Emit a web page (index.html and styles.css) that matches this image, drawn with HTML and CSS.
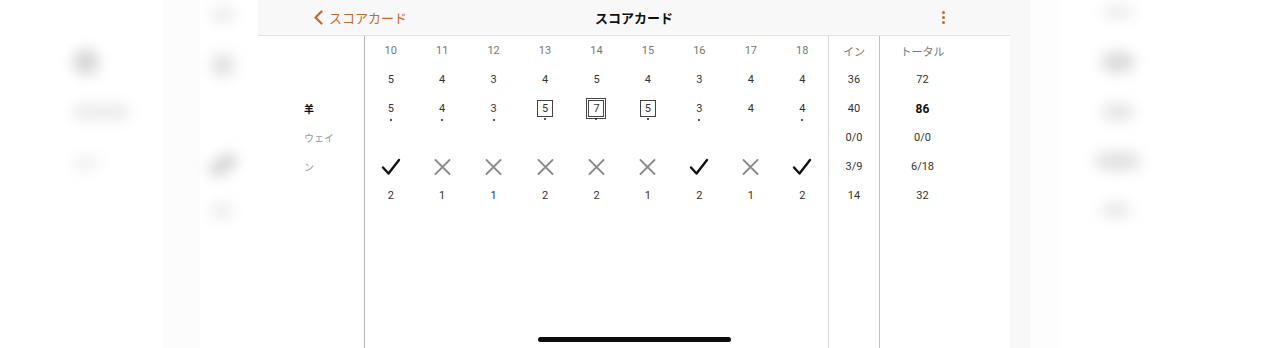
FILE: index.html
```html
<!DOCTYPE html>
<html lang="ja">
<head>
<meta charset="utf-8">
<title>スコアカード</title>
<link rel="stylesheet" href="styles.css">
</head>
<body>
<div class="screen">
  <div class="side side-left">
    <div class="bcol bcol-a">
      <div class="blob bl-1"></div>
      <div class="blob bl-2"></div>
      <div class="blob bl-3"></div>
    </div>
    <div class="strip strip-l"></div>
    <div class="bcol bcol-b">
      <div class="blob bm-1"></div>
      <div class="blob bm-2"></div>
      <div class="blob bm-3"></div>
      <div class="blob bm-4"></div>
    </div>
  </div>

  <main class="panel">
    <header class="nav">
      <a class="back" href="#">
        <svg class="chev" width="10" height="15" viewBox="0 0 10 15"><path d="M8.5 1.5 L2.5 7.5 L8.5 13.5" fill="none" stroke="currentColor" stroke-width="2.3" stroke-linecap="round" stroke-linejoin="round"/></svg>
        <span>スコアカード</span>
      </a>
      <h1 class="title">スコアカード</h1>
      <div class="menu"><span></span><span></span><span></span></div>
    </header>

    <div class="card">
      <div class="col labels">
        <div class="cell head"></div>
        <div class="cell"></div>
        <div class="cell lbl strong">羊</div>
        <div class="cell lbl">ウェイ</div>
        <div class="cell lbl">ン</div>
        <div class="cell"></div>
      </div>

      <div class="holes">
        <div class="col">
          <div class="cell head">10</div><div class="cell">5</div>
          <div class="cell"><span class="sc dot">5</span></div><div class="cell"></div>
          <div class="cell"><svg class="ok" width="20" height="18" viewBox="0 0 20 18"><path d="M2 9.5 L7.5 15.5 L18 2"/></svg></div>
          <div class="cell">2</div>
        </div>
        <div class="col">
          <div class="cell head">11</div><div class="cell">4</div>
          <div class="cell"><span class="sc dot">4</span></div><div class="cell"></div>
          <div class="cell"><svg class="ng" width="17" height="16" viewBox="0 0 17 16"><path d="M1.5 1 L15.5 15 M15.5 1 L1.5 15"/></svg></div>
          <div class="cell">1</div>
        </div>
        <div class="col">
          <div class="cell head">12</div><div class="cell">3</div>
          <div class="cell"><span class="sc dot">3</span></div><div class="cell"></div>
          <div class="cell"><svg class="ng" width="17" height="16" viewBox="0 0 17 16"><path d="M1.5 1 L15.5 15 M15.5 1 L1.5 15"/></svg></div>
          <div class="cell">1</div>
        </div>
        <div class="col">
          <div class="cell head">13</div><div class="cell">4</div>
          <div class="cell"><span class="sc dot box">5</span></div><div class="cell"></div>
          <div class="cell"><svg class="ng" width="17" height="16" viewBox="0 0 17 16"><path d="M1.5 1 L15.5 15 M15.5 1 L1.5 15"/></svg></div>
          <div class="cell">2</div>
        </div>
        <div class="col">
          <div class="cell head">14</div><div class="cell">5</div>
          <div class="cell"><span class="sc dot box dbl">7</span></div><div class="cell"></div>
          <div class="cell"><svg class="ng" width="17" height="16" viewBox="0 0 17 16"><path d="M1.5 1 L15.5 15 M15.5 1 L1.5 15"/></svg></div>
          <div class="cell">2</div>
        </div>
        <div class="col">
          <div class="cell head">15</div><div class="cell">4</div>
          <div class="cell"><span class="sc dot box">5</span></div><div class="cell"></div>
          <div class="cell"><svg class="ng" width="17" height="16" viewBox="0 0 17 16"><path d="M1.5 1 L15.5 15 M15.5 1 L1.5 15"/></svg></div>
          <div class="cell">1</div>
        </div>
        <div class="col">
          <div class="cell head">16</div><div class="cell">3</div>
          <div class="cell"><span class="sc dot">3</span></div><div class="cell"></div>
          <div class="cell"><svg class="ok" width="20" height="18" viewBox="0 0 20 18"><path d="M2 9.5 L7.5 15.5 L18 2"/></svg></div>
          <div class="cell">2</div>
        </div>
        <div class="col">
          <div class="cell head">17</div><div class="cell">4</div>
          <div class="cell"><span class="sc">4</span></div><div class="cell"></div>
          <div class="cell"><svg class="ng" width="17" height="16" viewBox="0 0 17 16"><path d="M1.5 1 L15.5 15 M15.5 1 L1.5 15"/></svg></div>
          <div class="cell">1</div>
        </div>
        <div class="col">
          <div class="cell head">18</div><div class="cell">4</div>
          <div class="cell"><span class="sc dot">4</span></div><div class="cell"></div>
          <div class="cell"><svg class="ok" width="20" height="18" viewBox="0 0 20 18"><path d="M2 9.5 L7.5 15.5 L18 2"/></svg></div>
          <div class="cell">2</div>
        </div>
      </div>

      <div class="col sum-in">
        <div class="cell head">イン</div>
        <div class="cell">36</div>
        <div class="cell">40</div>
        <div class="cell">0/0</div>
        <div class="cell">3/9</div>
        <div class="cell">14</div>
      </div>

      <div class="col sum-total">
        <div class="cell head">トータル</div>
        <div class="cell">72</div>
        <div class="cell bold">86</div>
        <div class="cell">0/0</div>
        <div class="cell">6/18</div>
        <div class="cell">32</div>
      </div>
    </div>

    <div class="home-indicator"></div>
  </main>

  <div class="side side-right">
    <div class="strip strip-r1"></div>
    <div class="strip strip-r2"></div>
    <div class="bcol bcol-c">
      <div class="blob br-1"></div>
      <div class="blob br-2"></div>
      <div class="blob br-3"></div>
      <div class="blob br-4"></div>
      <div class="blob br-5"></div>
    </div>
  </div>
</div>
</body>
</html>
```

FILE: styles.css
```css
* { box-sizing: border-box; margin: 0; padding: 0; }
html, body { width: 1268px; height: 348px; overflow: hidden; background: #fff; }
body { font-family: Roboto, "Noto Sans CJK JP", sans-serif; color: #333; }

.screen { display: flex; height: 348px; }

/* blurred backdrop */
.side { width: 258px; flex: none; display: flex; height: 100%; overflow: hidden; }
.bcol { display: flex; flex-direction: column; }
.blob { filter: blur(7px); border-radius: 50%; }
.strip { height: 100%; flex: none; }

.bcol-a { width: 163px; flex: none; padding-left: 72px; }
.bl-1 { width: 26px; height: 26px; background: #d6d6d6; margin-top: 49px; margin-left: 1px; }
.bl-2 { width: 58px; height: 14px; background: #e9e9e9; margin-top: 30px; border-radius: 7px; }
.bl-3 { width: 28px; height: 14px; background: #f0f0f0; margin-top: 37px; }

.strip-l { width: 37px; background: #fcfcfc; }

.bcol-b { width: 58px; flex: none; padding-left: 11px; }
.bm-1 { width: 24px; height: 16px; background: #ebebeb; margin-top: 7px; }
.bm-2 { width: 24px; height: 24px; background: #e2e2e2; margin-top: 30px; }
.bm-3 { width: 32px; height: 16px; background: #d2d2d2; margin-top: 80px; margin-left: -4px; transform: rotate(-35deg); }
.bm-4 { width: 22px; height: 16px; background: #ebebeb; margin-top: 30px; }

.strip-r1 { width: 20px; background: #f8f8f8; }
.strip-r2 { width: 30px; background: #fdfdfd; }
.bcol-c { width: 110px; flex: none; padding-left: 41px; }
.br-1 { width: 34px; height: 14px; background: #ececec; margin-top: 5px; }
.br-2 { width: 34px; height: 22px; background: #dadada; margin-top: 32px; }
.br-3 { width: 34px; height: 18px; background: #e4e4e4; margin-top: 30px; }
.br-4 { width: 48px; height: 20px; background: #e1e1e1; margin-top: 30px; margin-left: -7px; }
.br-5 { width: 30px; height: 18px; background: #e9e9e9; margin-top: 30px; }

/* main panel */
.panel { width: 752px; flex: none; display: flex; flex-direction: column; position: relative; background: #fff; }

.nav { height: 36px; flex: none; display: grid; grid-template-columns: 1fr auto 1fr; align-items: center; background: #f8f8f8; border-bottom: 1px solid #e1e1e1; }
.back { display: flex; align-items: center; gap: 6px; padding-left: 55px; color: #c46a2e; font-size: 13px; text-decoration: none; font-family: "Noto Sans CJK JP", sans-serif; }
.chev { display: block; }
.title { font-size: 13px; font-weight: 700; color: #111; font-family: "Noto Sans CJK JP", sans-serif; }
.menu { justify-self: end; padding-right: 65px; display: flex; flex-direction: column; gap: 1.5px; }
.menu span { width: 3.5px; height: 3.5px; border-radius: 50%; background: #c46a2e; }

.card { flex: 1; display: flex; }
.col { display: flex; flex-direction: column; }
.labels { width: 107px; flex: none; border-right: 1px solid #b5b5b5; padding-left: 46px; }
.holes { width: 463px; flex: none; display: grid; grid-template-columns: repeat(9, 1fr); }
.sum-in { width: 51px; flex: none; border-left: 1px solid #d9d9d9; }
.sum-total { width: 86px; flex: none; border-left: 1px solid #c2c2c2; }

.cell { height: 29px; display: flex; align-items: center; justify-content: center; font-size: 11px; color: #333; }
.cell.head { height: 29px; color: #777; }
.labels .cell { justify-content: flex-start; color: #9a9a9a; font-size: 10px; }
.labels .cell.strong { color: #111; font-weight: 700; }
.bold { font-weight: 700; color: #111; font-size: 12px; }

.sc { position: relative; display: inline-flex; align-items: center; justify-content: center; width: 16px; height: 17px; line-height: 1; }
.sc.box { border: 1px solid #444; }
.sc.dbl { box-shadow: 0 0 0 1px #fff, 0 0 0 2px #444; }
.sc.dot::after { content: ""; position: absolute; left: 50%; bottom: -4px; width: 2px; height: 2px; margin-left: -1px; border-radius: 50%; background: #222; }

.ok path { fill: none; stroke: #111; stroke-width: 2.4; stroke-linecap: round; stroke-linejoin: round; }
.ng path { fill: none; stroke: #8a8a8a; stroke-width: 1.8; stroke-linecap: round; }

.home-indicator { position: absolute; left: 50%; bottom: 6px; width: 193px; height: 5px; margin-left: -96px; border-radius: 3px; background: #0c0c0c; }
```
